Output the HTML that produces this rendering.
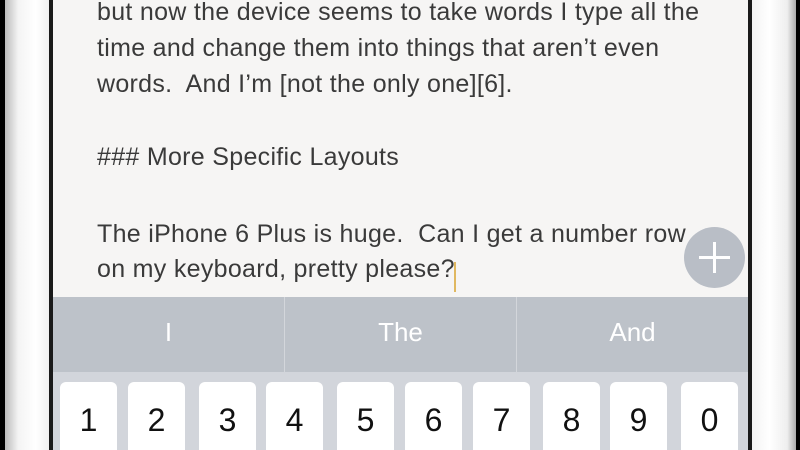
<!DOCTYPE html>
<html><head><style>
*{margin:0;padding:0;box-sizing:border-box}
body{width:800px;height:450px;overflow:hidden;background:#000;position:relative;font-family:"Liberation Sans",sans-serif}
.bezL{position:absolute;left:5px;top:0;width:44px;height:450px;background:linear-gradient(90deg,#bbb,#f4f4f4 30%,#fff 70%,#f0f0f0)}
.bezR{position:absolute;left:752px;top:0;width:44px;height:450px;background:linear-gradient(90deg,#f4f4f4,#fff 40%,#eee 80%,#aaa)}
.line{position:absolute;top:0;width:4px;height:450px;background:#1a1a1a}
.screen{position:absolute;left:53px;top:0;width:695px;height:450px;background:#f6f5f4;overflow:hidden}
.t{position:absolute;left:44px;font-size:25px;color:#3a3a3a;white-space:pre;letter-spacing:0.3px}
.sug{position:absolute;left:0;top:297px;width:695px;height:75px;background:#bdc2c9}
.sug div{position:absolute;top:0;height:75px;line-height:70px;text-align:center;color:#fff;font-size:26px}
.kb{position:absolute;left:0;top:372px;width:695px;height:78px;background:#d2d5db}
.key{position:absolute;top:10px;width:57px;height:80px;background:#fff;border-radius:6px;text-align:center;font-size:32px;line-height:76px;color:#111}
.plus{position:absolute;left:631px;top:227px;width:61px;height:61px;border-radius:50%;background:#b9bec6}
.cur{position:absolute;left:401px;top:262px;width:2px;height:30px;background:#e0b860}
</style></head><body>
<div class="bezL"></div><div class="line" style="left:49px"></div>
<div class="bezR"></div><div class="line" style="left:748px"></div>
<div class="screen">
<div class="t" style="top:-2px">but now the device seems to take words I type all the</div>
<div class="t" style="top:34px">time and change them into things that aren’t even</div>
<div class="t" style="top:70px">words.  And I’m [not the only one][6].</div>
<div class="t" style="top:143px">### More Specific Layouts</div>
<div class="t" style="top:220px">The iPhone 6 Plus is huge.  Can I get a number row</div>
<div class="t" style="top:255px">on my keyboard, pretty please?</div>
<div class="cur"></div>
<div class="plus"><svg width="61" height="61"><path d="M30.5 15v31M15 30.5h31" stroke="#fff" stroke-width="3"/></svg></div>
<div class="sug">
<div style="left:0;width:231px">I</div>
<div style="left:231px;width:232px;border-left:1px solid #d3d6db">The</div>
<div style="left:463px;width:232px;border-left:1px solid #d3d6db">And</div>
</div>
<div class="kb">
<div class="key" style="left:7px">1</div>
<div class="key" style="left:75px">2</div>
<div class="key" style="left:146px">3</div>
<div class="key" style="left:213px">4</div>
<div class="key" style="left:284px">5</div>
<div class="key" style="left:352px">6</div>
<div class="key" style="left:420px">7</div>
<div class="key" style="left:490px">8</div>
<div class="key" style="left:557px">9</div>
<div class="key" style="left:628px">0</div>
</div>
</div>
</body></html>
